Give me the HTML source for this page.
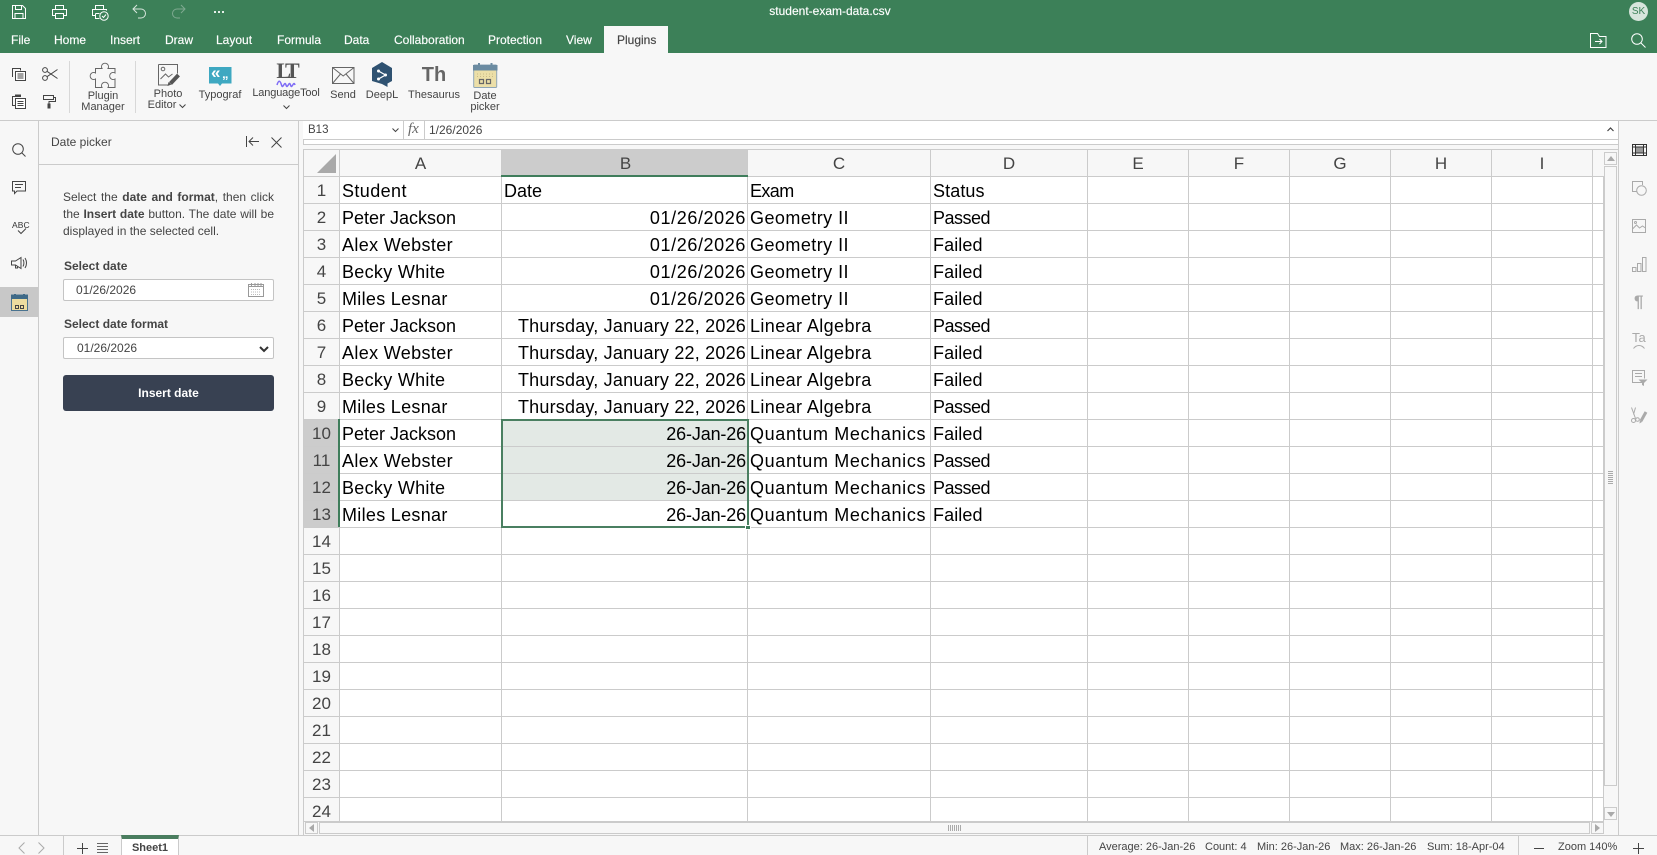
<!DOCTYPE html>
<html><head><meta charset="utf-8"><title>student-exam-data.csv</title>
<style>
*{box-sizing:border-box}
html,body{margin:0;padding:0;width:1657px;height:855px;overflow:hidden;background:#f7f7f7;font-family:"Liberation Sans",Arial,sans-serif;font-size:12px;color:#444}
.a{position:absolute}
.t{position:absolute;white-space:nowrap;line-height:14px}
.c{text-align:center}
svg{position:absolute;overflow:visible}
.tab{position:absolute;top:33px;line-height:14px;color:#fff;white-space:nowrap;-webkit-text-stroke:.15px #fff}
.l{position:absolute;font-size:11px;line-height:11px;text-align:center;white-space:nowrap;color:#444}
.w{stroke:#fff;fill:none;stroke-width:1}
.g{stroke:#444;fill:none;stroke-width:1}
.d{stroke:#aaa;fill:none;stroke-width:1}
#gridwrap{position:absolute;left:304px;top:150px;width:1300px;height:671px;overflow:hidden;background:#fff}
table{border-collapse:separate;border-spacing:0;table-layout:fixed;width:1300px;font-size:18px;color:#000}
th,td{height:27px;border-right:1px solid #cbcbcb;border-bottom:1px solid #cbcbcb;padding:2px 2px 0 2px;line-height:24px;overflow:hidden;white-space:nowrap;font-weight:normal}
th{background:#f7f7f7;color:#444;text-align:center;font-size:17px;padding:1px 0 0;line-height:25px}
.sh{background:#ccc}
td.r{text-align:right;padding-right:1px}
.ps{background:#e3e9e5}
.s0{letter-spacing:0}.s1{letter-spacing:.35px}.s2{letter-spacing:.3px}.s3{letter-spacing:.3px}
.d1{letter-spacing:.6px}.d2{letter-spacing:.2px}.d3{letter-spacing:-.15px}
.g1{letter-spacing:.45px}.g2{letter-spacing:.4px}.g3{letter-spacing:.65px}
.x1{letter-spacing:-.5px}.x2{letter-spacing:.1px}.x3{letter-spacing:.1px}.x4{letter-spacing:.4px}.x5{letter-spacing:-.6px}
</style></head>
<body>

<!-- title + tab bar -->
<div class="a" style="left:0;top:0;width:1657px;height:53px;background:#3c8058"></div>
<svg style="left:11px;top:4px" width="16" height="16" viewBox="0 0 16 16" class="w"><path class="w" d="M1.500 1.500h10l3 3v10h-13z M4.500 1.500v4h6v-4 M4 14.500v-5h8v5"/></svg>
<svg style="left:51px;top:4px" width="17" height="16" viewBox="0 0 17 16"><path class="w" d="M4.500 5V1.500h8V5 M4.500 11.500h-3v-6h14v6h-3 M4.500 9.500h8v5h-8z"/></svg>
<svg style="left:91px;top:4px" width="18" height="17" viewBox="0 0 18 17"><path class="w" d="M4.500 5V1.500h8V5 M4.500 11.500h-3v-6h14v1 M4.500 9.500h4 M4.500 9.500v5h4"/><circle class="w" cx="13" cy="12" r="4.200"/><path class="w" d="M11 12l1.500 1.500 2.500-3"/></svg>
<svg style="left:132px;top:4px" width="15" height="15" viewBox="0 0 15 15"><path class="w" d="M5 1L1 5l4 4 M1 5h8a4.500 4.500 0 0 1 0 9H6" style="stroke:#d8e6dd"/></svg>
<svg style="left:171px;top:4px" width="15" height="15" viewBox="0 0 15 15"><path class="w" d="M10 1l4 4-4 4 M14 5H6a4.500 4.500 0 0 0 0 9h3" style="stroke:#7fa991"/></svg>
<div class="a" style="left:214px;top:11px;width:2px;height:2px;background:#e6efe9;box-shadow:4px 0 #e6efe9,8px 0 #e6efe9"></div>
<div class="t c" style="left:680px;top:4px;width:300px;color:#fff;font-size:12px;-webkit-text-stroke:.15px #fff">student-exam-data.csv</div>
<div class="a c" style="left:1629px;top:2px;width:19px;height:19px;border-radius:50%;background:#d7e5dc;color:#3c8058;font-size:10px;line-height:19px">SK</div>

<div class="tab" style="left:11px">File</div>
<div class="tab" style="left:54px">Home</div>
<div class="tab" style="left:110px">Insert</div>
<div class="tab" style="left:165px">Draw</div>
<div class="tab" style="left:216px">Layout</div>
<div class="tab" style="left:277px">Formula</div>
<div class="tab" style="left:344px">Data</div>
<div class="tab" style="left:394px">Collaboration</div>
<div class="tab" style="left:488px">Protection</div>
<div class="tab" style="left:566px">View</div>
<div class="a" style="left:604px;top:26px;width:64px;height:27px;background:#f7f7f7"></div>
<div class="tab" style="left:617px;color:#444;-webkit-text-stroke:.15px #444">Plugins</div>
<svg style="left:1590px;top:33px" width="17" height="15" viewBox="0 0 17 15"><path class="w" d="M.5 14.500V.5h7l2 3h6.500v11z M5 8.500h7 M9.500 6l2.500 2.500-2.500 2.500"/></svg>
<svg style="left:1631px;top:33px" width="15" height="15" viewBox="0 0 15 15"><circle class="w" cx="6" cy="6" r="5.300"/><path class="w" d="M10 10l4.500 4.500"/></svg>

<!-- toolbar -->
<div class="a" style="left:0;top:120px;width:1657px;height:1px;background:#cbcbcb"></div>
<svg style="left:12px;top:68px" width="14" height="13" viewBox="0 0 14 13"><path class="g" d="M.5 9V.5h8v2"/><path d="M3.500 3.500h10v9h-10z" fill="#fff" stroke="#444"/><path class="g" d="M5.500 6h6M5.500 8h6M5.500 10h6"/></svg>
<svg style="left:42px;top:67px" width="16" height="14" viewBox="0 0 16 14"><circle class="g" cx="3" cy="3" r="2.400"/><circle class="g" cx="3" cy="11" r="2.400"/><path class="g" d="M5 4.300L15.500 11.500 M5 9.700L15.500 2.500"/></svg>
<svg style="left:12px;top:94px" width="14" height="15" viewBox="0 0 14 15"><path class="g" d="M3.500 2.500h-3v9h3"/><path d="M3.500 4.500h10v10h-10z" fill="#fff" stroke="#444"/><path d="M3 .5h6v2.500H3z" fill="#444"/><path class="g" d="M5.500 7.500h6M5.500 9.500h6M5.500 11.500h6"/></svg>
<svg style="left:43px;top:95px" width="13" height="14" viewBox="0 0 13 14"><path d="M.5 .5h10v4H.5z" fill="#f7f7f7" stroke="#444"/><path class="g" d="M10.500 2.500h2v4h-6.500v2"/><path d="M4.500 8.500h3v5h-3z" fill="#444"/></svg>
<div class="a" style="left:69px;top:61px;width:1px;height:52px;background:#d8d8d8"></div>
<svg style="left:90px;top:62px" width="26" height="26" viewBox="0 0 26 26"><path d="M5.500 6.500H12a3.500 3.500 0 1 1 6 0h7V11a3.500 3.500 0 1 0 0 6v8.500H18a3.500 3.500 0 1 0-6 0H5.500V17a3.500 3.500 0 1 1 0-6z" fill="none" stroke="#666"/></svg>
<div class="l" style="left:73px;width:60px;top:90.500px;line-height:11px">Plugin<br>Manager</div>
<div class="a" style="left:135px;top:61px;width:1px;height:52px;background:#d8d8d8"></div>
<svg style="left:158px;top:64px" width="24" height="23" viewBox="0 0 24 23"><path d="M.5 .5h19v9 M.5 .5v20.500h10" fill="none" stroke="#666"/><circle cx="5" cy="5" r="1.800" fill="none" stroke="#666"/><path d="M2.500 15l5-5 3 3 4-3" fill="none" stroke="#666"/><path d="M12.500 19.500l8-8.500" stroke="#555" stroke-width="4"/><path d="M9.500 22l1-4 3 2.500z" fill="#555"/></svg>
<div class="l" style="left:138px;width:60px;top:89px">Photo</div>
<div class="l" style="left:132px;width:60px;top:100px">Editor</div>
<svg style="left:179px;top:104px" width="7" height="4" viewBox="0 0 7 4"><path class="g" d="M.5 .5l3 3 3-3"/></svg>
<svg style="left:209px;top:67px" width="23" height="20" viewBox="0 0 23 20"><path d="M0 0h22.500v16.500h-9.500l-2 2.500-2-2.500H0z" fill="#3ea8c1"/></svg>
<div class="t" style="left:211px;top:66px;color:#fff;font-size:17px;font-weight:bold;line-height:14px">«</div>
<div class="t" style="left:222px;top:67px;color:#fff;font-size:13px;font-weight:bold;line-height:13px">„</div>
<div class="l" style="left:190px;width:60px;top:90px">Typograf</div>
<div class="t c" style="left:268px;top:58px;width:36px;font-size:22px;line-height:26px;font-weight:bold;color:#555;font-family:'Liberation Serif',serif;letter-spacing:-4px">LT</div>
<svg style="left:276px;top:80px" width="20" height="6" viewBox="0 0 20 6"><path d="M1 5c1.500-5 3-5 4.500 0s3-5 4.500 0 3-5 4.500 0 3-5 4.500 0" fill="none" stroke="#7f6cf5" stroke-width="1.500"/></svg>
<div class="l" style="left:250px;width:72px;top:88px;letter-spacing:-.15px">LanguageTool</div>
<svg style="left:283px;top:105px" width="7" height="4" viewBox="0 0 7 4"><path class="g" d="M.5 .5l3 3 3-3"/></svg>
<svg style="left:332px;top:67px" width="23" height="17" viewBox="0 0 23 17"><path d="M.5 .5h21.500v16H.5z M.5 .5l10.700 8.500L22 .5 M.5 16.500l8-9.500 M22 16.500l-8-9.500" fill="none" stroke="#666"/></svg>
<div class="l" style="left:313px;width:60px;top:90px">Send</div>
<svg style="left:372px;top:62px" width="21" height="26" viewBox="0 0 21 26"><path d="M10 0l10 6v13l-4.500 2.500V25l-5.500-3L0 19V6z" fill="#2f5271"/><path d="M13.500 13l-7-4 M13.500 13l-7 4" stroke="#fff" stroke-width="1.200"/><circle cx="13.500" cy="13" r="1.500" fill="#fff"/><circle cx="6.500" cy="9" r="1.500" fill="#fff"/><circle cx="6.500" cy="17" r="1.500" fill="#fff"/></svg>
<div class="l" style="left:352px;width:60px;top:90px">DeepL</div>
<div class="t c" style="left:414px;top:64px;width:40px;font-size:20px;line-height:22px;font-weight:bold;color:#666">Th</div>
<div class="l" style="left:404px;width:60px;top:90px">Thesaurus</div>
<svg style="left:473px;top:63px" width="25" height="25" viewBox="0 0 25 25"><rect x=".7" y="2" width="23" height="22.500" rx="1" fill="#ecdfa8" stroke="#8fa6b6"/><path d="M0 2h24.500v5.500H0z" fill="#6b8ba1"/><path d="M6 0v4M18.500 0v4" stroke="#6b8ba1" stroke-width="2"/><path d="M6.500 16.500h4v4h-4z M13.500 16.500h4v4h-4z" fill="none" stroke="#666" stroke-width="1.200"/><path d="M4 11h17M4 13.500h17" stroke="#c8bb88" stroke-width="1" stroke-dasharray="1 2"/></svg>
<div class="l" style="left:455px;width:60px;top:90.500px;line-height:11px">Date<br>picker</div>

<!-- left sidebar -->
<div class="a" style="left:38px;top:121px;width:1px;height:714px;background:#cbcbcb"></div>
<div class="a" style="left:298px;top:121px;width:1px;height:714px;background:#cbcbcb"></div>
<div class="a" style="left:39px;top:164px;width:259px;height:1px;background:#cbcbcb"></div>
<svg style="left:12px;top:143px" width="14" height="14" viewBox="0 0 14 14"><circle class="g" cx="6" cy="6" r="5.300"/><path class="g" d="M10 10l3.500 3.500"/></svg>
<svg style="left:12px;top:181px" width="14" height="14" viewBox="0 0 14 14"><path class="g" d="M.5 .5h13v9.500h-8.500l-2.500 2.500V10h-2z M3 3.500h8 M3 6.500h6"/></svg>
<div class="t" style="left:12px;top:221px;font-size:8.500px;line-height:8px;color:#333;letter-spacing:.1px">ABC</div>
<svg style="left:17px;top:228px" width="10" height="7" viewBox="0 0 10 7"><path class="g" d="M1 2.500l3 3L9 .5"/></svg>
<svg style="left:11px;top:256px" width="16" height="14" viewBox="0 0 16 14"><path class="g" d="M.5 5h4L10 1.500v11L4.500 9h-4z M4.500 9v3h2v-2 M12 3.500c1.200 2 1.200 5 0 7 M14 2c2 3 2 7 0 10"/></svg>
<div class="a" style="left:0;top:287px;width:38px;height:30px;background:#c8c8c8"></div>
<svg style="left:11px;top:294px" width="17" height="17" viewBox="0 0 17 17"><rect x=".5" y="1" width="16" height="15.500" fill="#ecdc9f" stroke="#4a7390"/><path d="M0 1h17v4H0z" fill="#3f6a88"/><path d="M4 0v2M13 0v2" stroke="#3f6a88" stroke-width="2"/><path d="M4.500 11.500h3v3h-3z M9.500 11.500h3v3h-3z" fill="none" stroke="#444"/></svg>

<!-- date picker panel -->
<div class="t" style="left:51px;top:135px;font-size:12px;color:#444">Date picker</div>
<svg style="left:246px;top:136px" width="13" height="11" viewBox="0 0 13 11"><path class="g" d="M.5 0v11 M13 5.500H3 M7 1.500l-4 4 4 4"/></svg>
<svg style="left:271px;top:137px" width="11" height="11" viewBox="0 0 11 11"><path class="g" d="M.5 .5l10 10 M10.500 .5l-10 10"/></svg>
<div class="t" style="left:63px;top:189px;width:211px;line-height:17px;white-space:normal;text-align:justify;color:#444">Select the <b style="font-weight:bold">date and format</b>, then click the <b>Insert date</b> button. The date will be displayed in the selected cell.</div>
<div class="t" style="left:64px;top:259px;font-weight:bold;color:#444">Select date</div>
<div class="a" style="left:63px;top:279px;width:211px;height:22px;background:#fff;border:1px solid #c4c4c4;border-radius:2px"></div>
<div class="t" style="left:76px;top:283px;color:#444">01/26/2026</div>
<svg style="left:248px;top:283px" width="16" height="14" viewBox="0 0 16 14"><rect x=".5" y="1.500" width="15" height="12" fill="none" stroke="#999"/><path d="M.5 3.500h15 M3.500 0v3M7 0v3M10 0v3M13 0v3" stroke="#999"/><path d="M3 6.500h10M3 9h10M3 11.500h10" stroke="#bbb" stroke-dasharray="1 1"/></svg>
<div class="t" style="left:64px;top:317px;font-weight:bold;color:#444">Select date format</div>
<div class="a" style="left:63px;top:337px;width:211px;height:22px;background:#fff;border:1px solid #c4c4c4;border-radius:2px"></div>
<div class="t" style="left:77px;top:341px;color:#444">01/26/2026</div>
<svg style="left:259px;top:346px" width="10" height="6" viewBox="0 0 10 6"><path d="M1 1l4 4 4-4" fill="none" stroke="#333" stroke-width="2"/></svg>
<div class="a c" style="left:63px;top:375px;width:211px;height:36px;background:#384152;border-radius:3px;color:#fff;font-weight:bold;line-height:36px">Insert date</div>

<!-- formula bar -->
<div class="a" style="left:303px;top:121px;width:1315px;height:19px;background:#fff;border-bottom:1px solid #cbcbcb"></div>
<div class="a" style="left:303px;top:140px;width:1315px;height:5px;background:#fff;border-bottom:1px solid #cbcbcb;border-left:1px solid #cbcbcb"></div>
<div class="a" style="left:304px;top:121px;width:100px;height:19px;background:#fff;border-right:1px solid #cbcbcb;border-bottom:1px solid #cbcbcb"></div>
<div class="t" style="left:308px;top:123px;color:#444;font-size:11.500px">B13</div>
<svg style="left:392px;top:128px" width="7" height="4" viewBox="0 0 7 4"><path class="g" d="M.5 .5l3 3 3-3"/></svg>
<div class="a" style="left:424px;top:121px;width:1px;height:18px;background:#cbcbcb"></div>
<div class="t" style="left:408px;top:122px;font-family:'Liberation Serif',serif;font-style:italic;font-size:15px;color:#666">fx</div>
<div class="t" style="left:429px;top:123px;color:#444;font-size:12px">1/26/2026</div>
<svg style="left:1607px;top:127px" width="7" height="5" viewBox="0 0 7 5"><path d="M.5 4l3-3 3 3" fill="none" stroke="#444" stroke-width="1.200"/></svg>
<div class="a" style="left:1618px;top:121px;width:1px;height:714px;background:#cbcbcb"></div>

<!-- grid -->
<div class="a" style="left:303px;top:149px;width:1315px;height:1px;background:#cbcbcb"></div>
<div class="a" style="left:303px;top:149px;width:1px;height:686px;background:#cbcbcb"></div>
<div id="gridwrap">
<table>
<colgroup><col style="width:36px"><col style="width:162px"><col style="width:246px"><col style="width:183px"><col style="width:157px"><col style="width:101px"><col style="width:101px"><col style="width:101px"><col style="width:101px"><col style="width:101px"><col style="width:11px"></colgroup>
<tr><th></th><th>A</th><th class="sh" style="padding-left:2px">B</th><th>C</th><th>D</th><th>E</th><th>F</th><th>G</th><th>H</th><th>I</th><th style="border-right:0"></th></tr>
<tr><th>1</th><td class="x4">Student</td><td>Date</td><td class="x5">Exam</td><td class="x3">Status</td><td></td><td></td><td></td><td></td><td></td><td></td></tr>
<tr><th>2</th><td class="s0">Peter Jackson</td><td class="r d1">01/26/2026</td><td class="g1">Geometry II</td><td class="x1">Passed</td><td></td><td></td><td></td><td></td><td></td><td></td></tr>
<tr><th>3</th><td class="s1">Alex Webster</td><td class="r d1">01/26/2026</td><td class="g1">Geometry II</td><td class="x2">Failed</td><td></td><td></td><td></td><td></td><td></td><td></td></tr>
<tr><th>4</th><td class="s2">Becky White</td><td class="r d1">01/26/2026</td><td class="g1">Geometry II</td><td class="x2">Failed</td><td></td><td></td><td></td><td></td><td></td><td></td></tr>
<tr><th>5</th><td class="s3">Miles Lesnar</td><td class="r d1">01/26/2026</td><td class="g1">Geometry II</td><td class="x2">Failed</td><td></td><td></td><td></td><td></td><td></td><td></td></tr>
<tr><th>6</th><td class="s0">Peter Jackson</td><td class="r d2">Thursday, January 22, 2026</td><td class="g2">Linear Algebra</td><td class="x1">Passed</td><td></td><td></td><td></td><td></td><td></td><td></td></tr>
<tr><th>7</th><td class="s1">Alex Webster</td><td class="r d2">Thursday, January 22, 2026</td><td class="g2">Linear Algebra</td><td class="x2">Failed</td><td></td><td></td><td></td><td></td><td></td><td></td></tr>
<tr><th>8</th><td class="s2">Becky White</td><td class="r d2">Thursday, January 22, 2026</td><td class="g2">Linear Algebra</td><td class="x2">Failed</td><td></td><td></td><td></td><td></td><td></td><td></td></tr>
<tr><th>9</th><td class="s3">Miles Lesnar</td><td class="r d2">Thursday, January 22, 2026</td><td class="g2">Linear Algebra</td><td class="x1">Passed</td><td></td><td></td><td></td><td></td><td></td><td></td></tr>
<tr><th class="sh">10</th><td class="s0">Peter Jackson</td><td class="r d3 ps">26-Jan-26</td><td class="g3">Quantum Mechanics</td><td class="x2">Failed</td><td></td><td></td><td></td><td></td><td></td><td></td></tr>
<tr><th class="sh">11</th><td class="s1">Alex Webster</td><td class="r d3 ps">26-Jan-26</td><td class="g3">Quantum Mechanics</td><td class="x1">Passed</td><td></td><td></td><td></td><td></td><td></td><td></td></tr>
<tr><th class="sh">12</th><td class="s2">Becky White</td><td class="r d3 ps">26-Jan-26</td><td class="g3">Quantum Mechanics</td><td class="x1">Passed</td><td></td><td></td><td></td><td></td><td></td><td></td></tr>
<tr><th class="sh">13</th><td class="s3">Miles Lesnar</td><td class="r d3">26-Jan-26</td><td class="g3">Quantum Mechanics</td><td class="x2">Failed</td><td></td><td></td><td></td><td></td><td></td><td></td></tr>
<tr><th>14</th><td></td><td></td><td></td><td></td><td></td><td></td><td></td><td></td><td></td><td></td></tr>
<tr><th>15</th><td></td><td></td><td></td><td></td><td></td><td></td><td></td><td></td><td></td><td></td></tr>
<tr><th>16</th><td></td><td></td><td></td><td></td><td></td><td></td><td></td><td></td><td></td><td></td></tr>
<tr><th>17</th><td></td><td></td><td></td><td></td><td></td><td></td><td></td><td></td><td></td><td></td></tr>
<tr><th>18</th><td></td><td></td><td></td><td></td><td></td><td></td><td></td><td></td><td></td><td></td></tr>
<tr><th>19</th><td></td><td></td><td></td><td></td><td></td><td></td><td></td><td></td><td></td><td></td></tr>
<tr><th>20</th><td></td><td></td><td></td><td></td><td></td><td></td><td></td><td></td><td></td><td></td></tr>
<tr><th>21</th><td></td><td></td><td></td><td></td><td></td><td></td><td></td><td></td><td></td><td></td></tr>
<tr><th>22</th><td></td><td></td><td></td><td></td><td></td><td></td><td></td><td></td><td></td><td></td></tr>
<tr><th>23</th><td></td><td></td><td></td><td></td><td></td><td></td><td></td><td></td><td></td><td></td></tr>
<tr><th>24</th><td></td><td></td><td></td><td></td><td></td><td></td><td></td><td></td><td></td><td></td></tr>
</table>
<!-- corner triangle -->
<svg style="left:13px;top:4px" width="19" height="19" viewBox="0 0 19 19"><path d="M19 0v19H0z" fill="#a9a9a9"/></svg>
<!-- header + selection marks -->
<div class="a" style="left:197px;top:25px;width:247px;height:2px;background:#3f7d5b"></div>
<div class="a" style="left:34px;top:269px;width:2px;height:108px;background:#3f7d5b"></div>
<div class="a" style="left:197px;top:269px;width:248px;height:109px;border:2px solid #4a7f61"></div>
<div class="a" style="left:441px;top:375px;width:6px;height:5px;background:#3f7d5b;border:1px solid #fff"></div>
</div>

<!-- vertical scrollbar -->
<div class="a" style="left:1604px;top:150px;width:14px;height:671px;background:#f7f7f7"></div>
<div class="a" style="left:1604px;top:152px;width:13px;height:13px;border:1px solid #cbcbcb;background:#f7f7f7"></div>
<svg style="left:1607px;top:156px" width="8" height="5" viewBox="0 0 8 5"><path d="M4 0l4 5H0z" fill="#a9a9a9"/></svg>
<div class="a" style="left:1604px;top:166px;width:13px;height:620px;border:1px solid #cbcbcb;background:#f7f7f7"></div>
<div class="a" style="left:1608px;top:471px;width:5px;height:13px;background:repeating-linear-gradient(#aaa 0 1px,transparent 1px 2px)"></div>
<div class="a" style="left:1604px;top:807px;width:13px;height:13px;border:1px solid #cbcbcb;background:#f7f7f7"></div>
<svg style="left:1607px;top:812px" width="8" height="5" viewBox="0 0 8 5"><path d="M4 5l4-5H0z" fill="#a9a9a9"/></svg>
<!-- horizontal scrollbar -->
<div class="a" style="left:304px;top:821px;width:1300px;height:14px;background:#f7f7f7;border-top:1px solid #cbcbcb"></div>
<div class="a" style="left:305px;top:822px;width:13px;height:12px;border:1px solid #cbcbcb;background:#f7f7f7"></div>
<svg style="left:309px;top:824px" width="5" height="8" viewBox="0 0 5 8"><path d="M0 4l5-4v8z" fill="#a9a9a9"/></svg>
<div class="a" style="left:319px;top:822px;width:1271px;height:12px;border:1px solid #cbcbcb;background:#f7f7f7"></div>
<div class="a" style="left:948px;top:825px;width:13px;height:6px;background:repeating-linear-gradient(90deg,#aaa 0 1px,transparent 1px 2px)"></div>
<div class="a" style="left:1591px;top:822px;width:13px;height:12px;border:1px solid #cbcbcb;background:#f7f7f7"></div>
<svg style="left:1595px;top:824px" width="5" height="8" viewBox="0 0 5 8"><path d="M5 4L0 0v8z" fill="#a9a9a9"/></svg>

<!-- right sidebar -->
<svg style="left:1632px;top:144px" width="15" height="12" viewBox="0 0 15 12"><path d="M3.500 3h8v6h-8z" fill="#999"/><path d="M.5 .5h14v11H.5z M.5 3h14 M.5 9h14 M3.500 .5v11 M11.500 .5v11" fill="none" stroke="#333"/></svg>
<svg style="left:1632px;top:181px" width="15" height="15" viewBox="0 0 15 15"><path class="d" d="M5 10.500H.5v-10h10V4"/><circle cx="9.500" cy="9.500" r="4.800" fill="#f7f7f7" stroke="#aaa"/></svg>
<svg style="left:1632px;top:219px" width="15" height="14" viewBox="0 0 15 14"><path class="d" d="M.5 .5h13v13H.5z M.5 10l4-4 3 3 3-2 3 2"/><circle class="d" cx="3.500" cy="3.500" r="1"/></svg>
<svg style="left:1632px;top:257px" width="15" height="15" viewBox="0 0 15 15"><path class="d" d="M.5 10.500h3.500v4H.5z M5.500 6.500h3.500v8H5.500z M10.500 .5h3.500v14h-3.500z"/></svg>
<div class="t" style="left:1634px;top:294px;font-size:17px;font-weight:bold;line-height:16px;color:#aaa">¶</div>
<div class="t" style="left:1632px;top:331px;font-size:13px;line-height:14px;color:#aaa">Ta</div>
<svg style="left:1633px;top:344px" width="12" height="5" viewBox="0 0 12 5"><path class="d" d="M.5 4.500c3-4 8-4 11 0"/></svg>
<svg style="left:1632px;top:370px" width="16" height="17" viewBox="0 0 16 17"><path class="d" d="M10 12.500H.5V.5h12v8 M3 3.500h7 M3 6.500h7"/><path d="M6.500 9.500h9l-3.500 3.500v3l-2-1v-2z" fill="#aaa"/></svg>
<svg style="left:1630px;top:407px" width="18" height="17" viewBox="0 0 18 17"><path class="d" d="M1.500 .5l4 11 M5.500 .5l-2 7"/><circle class="d" cx="3.500" cy="13.500" r="2"/><circle class="d" cx="7.500" cy="12.500" r="1.800"/><path d="M11 14l5-9" stroke="#aaa" stroke-width="3"/><path d="M9.500 16.500l.3-3 2.500 1.300z" fill="#aaa"/></svg>

<!-- status bar -->
<div class="a" style="left:0;top:835px;width:1657px;height:20px;background:#f7f7f7;border-top:1px solid #cbcbcb"></div>
<svg style="left:18px;top:842px" width="7" height="12" viewBox="0 0 7 12"><path class="d" d="M6.500 .5L1 6l5.500 5.500"/></svg>
<svg style="left:38px;top:842px" width="7" height="12" viewBox="0 0 7 12"><path class="d" d="M.5 .5L6 6 .5 11.500"/></svg>
<div class="a" style="left:63px;top:836px;width:1px;height:19px;background:#cbcbcb"></div>
<svg style="left:77px;top:843px" width="11" height="11" viewBox="0 0 11 11"><path class="g" d="M5.500 0v11 M0 5.500h11"/></svg>
<svg style="left:97px;top:843px" width="11" height="10" viewBox="0 0 11 10"><path d="M0 .5h11M0 3.500h11M0 6.500h11M0 9.500h11" stroke="#666"/></svg>
<div class="a" style="left:121px;top:835px;width:58px;height:20px;background:#fff;border-right:1px solid #cbcbcb;border-left:1px solid #cbcbcb;border-top:4px solid #4a7d5f"></div>
<div class="t c" style="left:121px;top:841px;width:58px;color:#444;font-weight:bold;font-size:11px">Sheet1</div>
<div class="a" style="left:1087px;top:836px;width:1px;height:19px;background:#cbcbcb"></div>
<div class="t" style="left:1099px;top:840px;font-size:11px">Average: 26-Jan-26</div>
<div class="t" style="left:1205px;top:840px;font-size:11px">Count: 4</div>
<div class="t" style="left:1257px;top:840px;font-size:11px">Min: 26-Jan-26</div>
<div class="t" style="left:1340px;top:840px;font-size:11px">Max: 26-Jan-26</div>
<div class="t" style="left:1427px;top:840px;font-size:11px">Sum: 18-Apr-04</div>
<div class="a" style="left:1518px;top:836px;width:1px;height:19px;background:#cbcbcb"></div>
<div class="a" style="left:1534px;top:848px;width:10px;height:1px;background:#444"></div>
<div class="t" style="left:1558px;top:840px;font-size:11px">Zoom 140%</div>
<svg style="left:1633px;top:843px" width="11" height="11" viewBox="0 0 11 11"><path class="g" d="M5.500 0v11 M0 5.500h11"/></svg>
</body></html>
